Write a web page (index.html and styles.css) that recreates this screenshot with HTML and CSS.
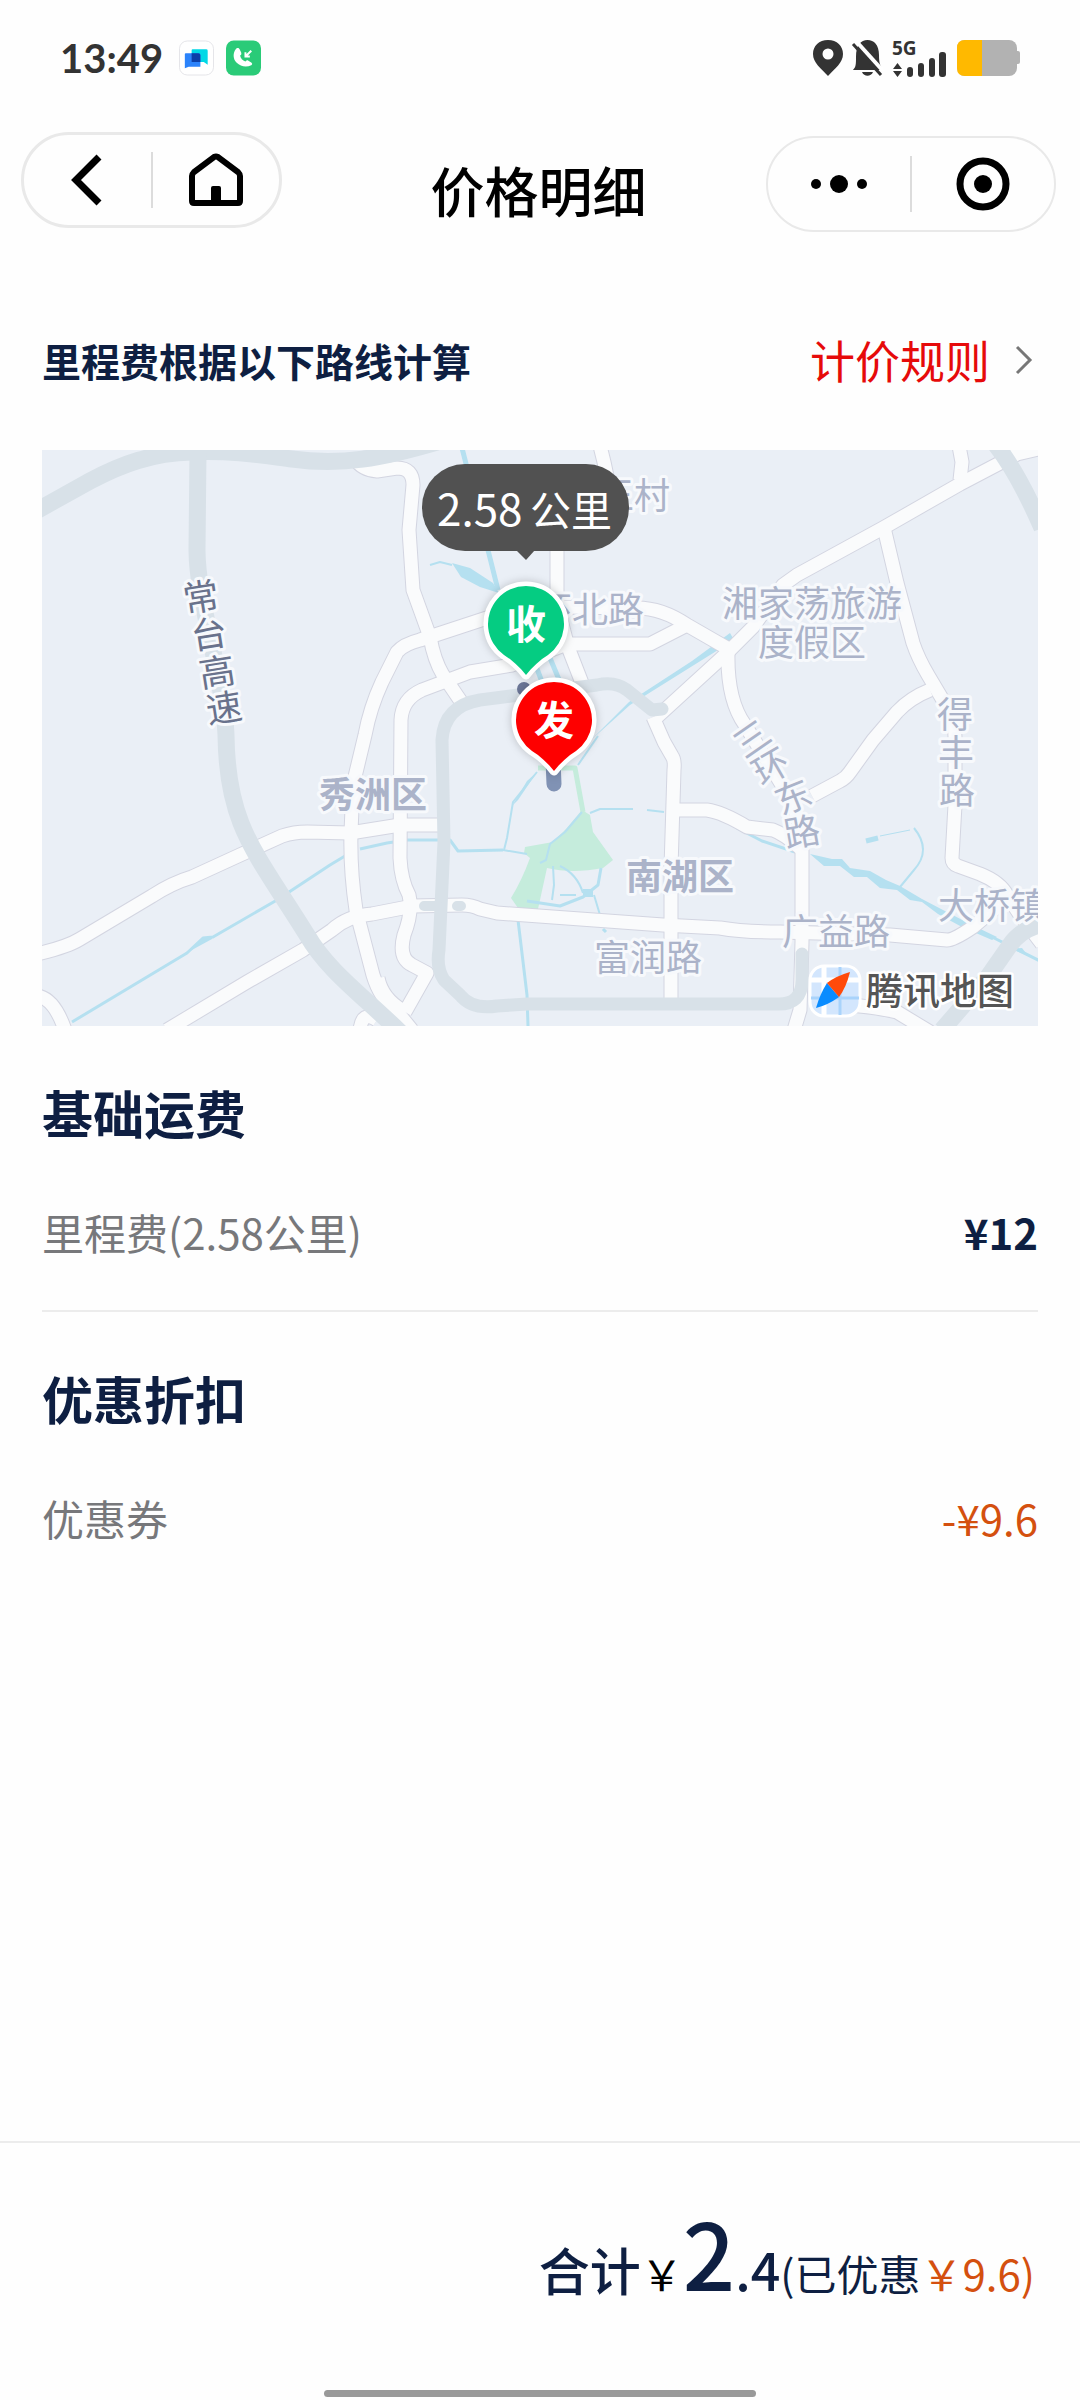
FILE: index.html
```html
<!DOCTYPE html>
<html lang="zh-CN">
<head>
    <meta charset="UTF-8">
    <meta name="viewport" content="width=device-width, initial-scale=1.0">
    <title>价格明细</title>
    <link rel="stylesheet" href="styles.css">
</head>
<body>
    <div class="status-bar">
        <div class="status-left">
            <span class="time">13:49</span>
            <svg class="app-icon" viewBox="0 0 36 36">
                <rect x="0.5" y="0.5" width="35" height="35" rx="8" fill="#fff" stroke="#e4e4e8"/>
                <path d="M14 9h14q1.500 0 1.500 1.500v14.500l-4-3H13V10q0-1 1-1z" fill="#00d8e6"/>
                <path d="M7 13h13q2 0 2 2v12H10l-4 1.500V14q0-1 1-1z" fill="#2b83fb"/>
                <path d="M13 13h7q2 0 2 2v7h-9z" fill="#0b3fa8"/>
            </svg>
            <svg class="app-icon" viewBox="0 0 36 36">
                <rect width="36" height="36" rx="8" fill="#2acb78"/>
                <path d="M10 9c-3 4-3 10 1 14 4 4 10 5 15 2.500 1.500-.8 1-2 0-2.800l-3-2c-1-.6-2-.2-3 .8-3-.8-5-3-5.500-6 1.500-1 1.500-2 1-3.500L14 9c-1-2-3-1.500-4 0z" fill="#fff"/>
                <path d="M26 10.500l-6 6m0-4.500v4.500h4.500" fill="none" stroke="#fff" stroke-width="2"/>
            </svg>
        </div>
        <div class="status-right">
            <svg class="status-icons" viewBox="0 0 208 38">
                <path d="M16 1C7 1 1 7 1 15c0 9 8 14 15 22 7-8 15-13 15-22C31 7 25 1 16 1zm0 8.500a5.500 5.500 0 1 1 0 11 5.500 5.500 0 0 1 0-11z" fill="#333" fill-rule="evenodd"/>
                <path d="M41 31c3-3 3-6 3-13C44 6 49 1 55.500 1S67 6 67 16c0 8 1 10 4 15zM50 33h11c-2 5-9 5-11 0z" fill="#333"/>
                <path d="M44 2l28 31" stroke="#fff" stroke-width="4"/>
                <path d="M41 5l28 31" stroke="#333" stroke-width="3"/>
                <text class="net-label" x="80" y="16">5G</text>
                <path d="M81 30l4.500-6 4.500 6zM81 32l4.500 6 4.500-6z" fill="#333"/>
                <g fill="#333">
                    <rect x="95" y="28" width="6" height="10" rx="3"/>
                    <rect x="106" y="24" width="6" height="14" rx="3"/>
                    <rect x="117" y="19" width="6" height="19" rx="3"/>
                    <rect x="127" y="13" width="7" height="25" rx="3"/>
                </g>
                <rect x="145" y="1" width="60" height="36" rx="8" fill="#b2b2b2"/>
                <rect x="203" y="12" width="5" height="13" rx="2" fill="#b2b2b2"/>
                <path d="M153 1h17v36h-17q-8 0-8-8V9q0-8 8-8z" fill="#ffb900"/>
            </svg>
        </div>
    </div>

    <header class="nav">
        <div class="capsule capsule-left">
            <button type="button" aria-label="返回">
                <svg width="32" height="52" viewBox="0 0 32 52"><path d="M28 3L5 26l23 23" fill="none" stroke="#000" stroke-width="7"/></svg>
            </button>
            <span class="capsule-line"></span>
            <button type="button" aria-label="首页">
                <svg width="56" height="54" viewBox="0 0 56 54">
                    <path d="M4 23q0-2 2-4L26 4q2-1 4 0l20 15q2 2 2 4v25q0 2-2 2H6q-2 0-2-2z" fill="none" stroke="#000" stroke-width="6"/>
                    <path d="M23 50V35q0-2 2-2h6q2 0 2 2v15z"/>
                </svg>
            </button>
        </div>
        <h1>价格明细</h1>
        <div class="capsule capsule-right">
            <button type="button" aria-label="更多">
                <svg width="58" height="20" viewBox="0 0 58 20"><circle cx="6" cy="10" r="5"/><circle cx="29" cy="10" r="9"/><circle cx="52" cy="10" r="5"/></svg>
            </button>
            <span class="capsule-line"></span>
            <button type="button" aria-label="关闭">
                <svg width="54" height="54" viewBox="0 0 54 54"><circle cx="27" cy="27" r="23" fill="none" stroke="#000" stroke-width="7"/><circle cx="27" cy="27" r="9"/></svg>
            </button>
        </div>
    </header>

    <main class="content">
        <div class="route-head">
            <h2 class="route-title">里程费根据以下路线计算</h2>
            <a class="rule-link" href="#rules">计价规则
                <svg width="20" height="30" viewBox="0 0 20 30"><path d="M3 2l13 13L3 28" fill="none" stroke="#777" stroke-width="3"/></svg>
            </a>
        </div>

        <svg class="map" viewBox="0 0 996 576" role="img" aria-label="路线地图">
            <defs>
                <!-- all ordinary roads, drawn twice: outline, then fill -->
                <g id="roads">
                    <path d="M1000 -2L975 4 958 13 918 34 841 78 755 125 741 135 711 177 685 203 615 267"/>
                    <path d="M917 -4L920 12 918 30"/>
                    <path d="M843 82L855 133 871 193Q876 208 886 225L905 257Q913 270 913 287V355L910 408Q910 414 916 416L938 424Q958 432 965 445L978 465 1000 494"/>
                    <path d="M888 240Q868 248 855 262L831 290 808 322Q804 328 798 331L770 346"/>
                    <path d="M686 203Q685 250 703 275L740 335Q758 360 760 398V492L758 560 752 580"/>
                    <path d="M685 198L645 175Q620 158 595 158L518 157Q480 157 448 167L378 190Q362 194 355 202L340 232Q328 258 323 285L311 335 309 382Q308 420 314 460L331 525Q338 548 352 558L370 580"/>
                    <path d="M645 175L608 194H525L470 215 428 222 380 240Q360 249 359 270L358 408Q359 430 367 445 371 462 362 485 356 508 370 515L385 523 363 562"/>
                    <path d="M312 8Q320 20 335 21L355 18Q371 18 371 35L367 80 371 140 388 187Q392 210 401 225L420 253"/>
                    <path d="M558 -4L562 12 570 50"/>
                    <path d="M515 90V155L526 197 540 233"/>
                    <path d="M-5 504Q25 497 38 489L110 446Q130 433 150 427L198 405 240 386Q252 382 265 382L308 383 358 375H402"/>
                    <path d="M125 580L205 532 261 500 290 480Q305 466 330 464L371 456 420 455Q430 455 438 459L455 463 621 475 678 478Q700 482 738 482L848 485 905 490Q912 490 931 477L968 446"/>
                    <path d="M611 267L622 292 630 306Q633 310 632 320L629 418V552"/>
                    <path d="M631 360H665Q680 362 705 377L731 380Q742 384 758 398"/>
                    <path d="M-5 546Q12 548 23 580"/>
                    <path d="M336 528Q340 548 360 560"/>
                    <path d="M800 554Q840 558 855 562L888 582"/>
                    <path d="M335 570Q320 560 318 580"/>
                </g>
                <path id="pin" d="M0 51C-6 43-14 36-22 31A38 38 0 1 1 22 31C14 36 6 43 0 51Z"/>
            </defs>

            <rect width="996" height="576" fill="#eaeff6"/>

            <g class="park">
                <path d="M540 360L548 365 551 382 571 410 561 418Q530 424 505 418L496 459 476 458 469 448Q480 430 488 408L482 403 483 397 511 392 525 378Z"/>
                <path class="park-edge" d="M496 318H533L541 362"/>
            </g>

            <g class="water">
                <path class="w5" d="M420 -2L447 104 456 140"/>
                <path class="w2" d="M388 115L398 112 410 115"/>
                <path class="blob" d="M410 113L428 118 451 133 457 143 438 137 419 127Z"/>
                <path class="w5" d="M491 208L500 232M508 208L518 232"/>
                <path class="blob" d="M688 183L692 190 660 210 588 255 549 290 587 252 650 211Z"/>
                <path class="w3" d="M30 572L145 503 161 488 171 487 235 450 288 415 303 406M318 399L345 393 365 390H408L416 401 461 400"/>
                <path class="blob" d="M148 501L160 488 170 486 170 489Z"/>
                <path class="w2" d="M461 400L485 404M495 322L471 352 465 388 462 400"/>
                <path class="blob" d="M495 322L485 331 470 356 476 350Z"/>
                <path class="w2" d="M556 286L536 315M540 362L523 382 508 394 504 410 498 413M548 363L558 359H591M605 360L622 362"/>
                <path class="w2" d="M511 416L512 435 510 450M518 416Q535 424 541 443M518 445H534M552 445L558 465"/>
                <path class="w3" d="M476 470L485 545 486 576M485 451L518 456 541 447 556 435 559 418M561 479L564 482"/>
                <path class="blob" d="M541 439H551V447H541Z"/>
                <path class="w3" d="M695 378L720 391 753 402"/>
                <path class="blob" d="M768 404L790 409 800 409 808 418 828 421 844 430 858 436 880 449 901 460 930 475 955 487 950 490 920 477 896 464 880 452 868 450 855 440 838 438 825 427 812 427 798 416 782 416Z"/>
                <path class="w3" d="M952 488L998 511"/>
                <path class="blob" d="M970 499L980 498 986 506Z"/>
                <path class="w2" d="M858 437L872 420Q890 400 872 378"/>
                <path class="w1" d="M838 386L868 380"/>
                <path class="w5" d="M824 391L836 388"/>
            </g>

            <use href="#roads" class="road-edge"/>
            <use href="#roads" class="road-fill"/>

            <g class="highway">
                <path class="wide" d="M-6 61L48 31C80 14 110 3 150 2C190 0 225 6 250 9C300 16 340 8 395 -8"/>
                <path class="wide" d="M156 2L155 100C155 150 182 230 184 285C185 375 212 400 265 485C285 520 320 545 358 582"/>
                <path class="wide" d="M950 -10Q975 20 1000 78"/>
                <path class="wide" d="M900 580L945 528 968 495Q980 478 1002 474"/>
                <path class="ring" d="M620 259L610 260 585 240Q573 231 555 235L438 250Q402 256 400 290L402 392 397 500Q394 518 402 530L418 545Q430 560 455 556L485 554H735Q760 555 760 530V504"/>
                <path class="stub" d="M382 456H396M415 456H419"/>
            </g>

            <g class="label">
                <text x="592" y="59">王村</text>
                <text x="548" y="173">环北路</text>
                <text x="770" y="167">湘家荡旅游</text>
                <text x="770" y="206">度假区</text>
                <text x="606" y="521">富润路</text>
                <text x="794" y="495">广益路</text>
                <text x="950" y="469">大桥镇</text>
                <text class="district" x="331" y="358">秀洲区</text>
                <text class="district" x="638" y="440">南湖区</text>
                <text x="913" y="278">得</text>
                <text x="914" y="316">丰</text>
                <text x="915" y="354">路</text>
                <text transform="translate(710 289) rotate(-35)" y="13">三</text>
                <text transform="translate(729 317) rotate(-30)" y="13">环</text>
                <text transform="translate(751 347) rotate(-22)" y="13">东</text>
                <text transform="translate(760 382) rotate(-10)" y="13">路</text>
            </g>
            <g class="label label-dark">
                <text transform="translate(159 147) rotate(-9)" y="13">常</text>
                <text transform="translate(167 184) rotate(-9)" y="13">台</text>
                <text transform="translate(175 222) rotate(-9)" y="13">高</text>
                <text transform="translate(182 258) rotate(-9)" y="13">速</text>
            </g>

            <!-- Tencent map mark -->
            <g>
                <rect x="768" y="516" width="50" height="50" rx="14" fill="#d3e6fd" stroke="#fff" stroke-width="3"/>
                <path d="M782 517V565M769 530H817" stroke="#fff" stroke-width="5"/>
                <path d="M798 517V565M769 548H817" stroke="#a9d3fb" stroke-width="3"/>
                <path d="M785 533Q778 544 774 558 786 555 797 547Z" fill="#0a8cff"/>
                <path d="M808 522Q794 526 785 533L797 547Q804 538 808 522Z" fill="#ff4a0a"/>
                <text class="map-brand" x="824" y="555">腾讯地图</text>
            </g>

            <circle cx="482" cy="239" r="7" fill="#6c7798"/>
            <path d="M511 310L512 334" stroke="#8092b4" stroke-width="15" stroke-linecap="round"/>

            <g class="pin" transform="translate(484 174)">
                <use href="#pin" fill="#05cc82"/>
                <text y="15">收</text>
            </g>
            <g class="pin" transform="translate(512 270)">
                <use href="#pin" fill="#fe0000"/>
                <text y="15">发</text>
            </g>

            <g class="bubble">
                <rect x="380" y="14" width="207" height="87" rx="43"/>
                <path d="M474 100H493L484 110Z"/>
                <text class="km" x="395" y="76">2.58</text>
                <text class="unit" x="488" y="76">公里</text>
            </g>
        </svg>

        <section class="fee">
            <h2>基础运费</h2>
            <dl class="fee-row">
                <dt>里程费(2.58公里)</dt>
                <dd class="price">¥12</dd>
            </dl>
        </section>
        <section class="fee">
            <h2>优惠折扣</h2>
            <dl class="fee-row">
                <dt>优惠券</dt>
                <dd class="discount">-¥9.6</dd>
            </dl>
        </section>
    </main>

    <footer class="total">
        <p><strong class="total-label">合计</strong><span class="yen">￥</span><strong class="total-int">2</strong><strong class="total-dec">.4</strong><span>(已优惠</span><span class="discount">￥9.6)</span></p>
        <div class="home-bar"></div>
    </footer>
</body>
</html>
```

FILE: styles.css
```css
* {
    box-sizing: border-box;
    margin: 0;
    padding: 0;
}

body {
    display: flex;
    flex-direction: column;
    min-height: 100vh;
    background: #fefefe;
    color: #0e1f42;
    font-family: "Noto Sans CJK SC", "Noto Sans", sans-serif;
    font-size: 42px;
    line-height: 60px;
}

h1, h2 {
    font-weight: 700;
}

/* status bar */
.status-bar {
    display: flex;
    justify-content: space-between;
    align-items: center;
    height: 116px;
    padding: 0 60px;
}

.status-left {
    display: flex;
    align-items: center;
    gap: 12px;
}

.time {
    margin-right: 4px;
    color: #333;
    font-family: Lato, sans-serif;
    font-size: 40px;
    font-weight: 700;
}

.app-icon {
    width: 35px;
    height: 36px;
}

.status-right {
    display: flex;
}

.status-icons {
    width: 208px;
    height: 38px;
}

.net-label {
    fill: #333;
    font-family: "Open Sans", sans-serif;
    font-size: 19px;
    font-weight: 700;
}

/* nav */
.nav {
    display: grid;
    grid-template-columns: 1fr auto 1fr;
    align-items: start;
    padding: 16px 24px 0 21px;
}

.nav h1 {
    padding-top: 28px;
    color: #000;
    font-size: 54px;
    font-weight: 500;
}

.capsule {
    display: flex;
    align-items: center;
    height: 96px;
    border: 2px solid #e9e9e9;
    border-radius: 48px;
}

.capsule button {
    display: flex;
    flex: 1;
    justify-content: center;
    border: none;
    background: none;
}

.capsule-left {
    width: 261px;
    border-width: 3px;
}

.capsule-right {
    justify-self: end;
    width: 290px;
    margin-top: 4px;
}

.capsule-line {
    width: 2px;
    height: 56px;
    background: #dcdcdc;
}

/* content */
.content {
    padding: 0 42px;
}

.route-head {
    display: flex;
    justify-content: space-between;
    align-items: center;
    padding: 98px 4px 60px 0;
}

.route-title {
    font-size: 39px;
}

.rule-link {
    display: flex;
    align-items: center;
    gap: 24px;
    color: #e60a0a;
    font-size: 45px;
    text-decoration: none;
}

.map {
    display: block;
    width: 100%;
    height: auto;
    font-family: "Noto Sans CJK SC", sans-serif;
}

.map path {
    stroke-linejoin: round;
}

.road-edge {
    fill: none;
    stroke: #d3d5e1;
    stroke-width: 15px;
}

.road-fill {
    fill: none;
    stroke: #fafbfc;
    stroke-width: 13px;
}

.highway path {
    fill: none;
    stroke: #d8e1e8;
}

.highway .wide {
    stroke-width: 17px;
}

.highway .ring {
    stroke-width: 13px;
    stroke-linecap: round;
}

.highway .stub {
    stroke-width: 10px;
    stroke-linecap: round;
}

.water path {
    fill: none;
    stroke: #b5e0f0;
}

.water .blob {
    fill: #b5e0f0;
    stroke: none;
}

.water .w1 {
    stroke-width: 1px;
}

.water .w2 {
    stroke-width: 2px;
}

.water .w3 {
    stroke-width: 3px;
}

.water .w5 {
    stroke-width: 5px;
}

.park {
    fill: #c5ecdc;
}

.park .park-edge {
    fill: none;
    stroke: #c5ecdc;
    stroke-width: 5px;
}

.label text {
    fill: #abb3c9;
    stroke: #f7f9fc;
    stroke-width: 6px;
    stroke-linejoin: round;
    paint-order: stroke;
    font-size: 36px;
    text-anchor: middle;
}

.label .district {
    font-weight: 700;
}

.label-dark text {
    fill: #69728c;
}

.map-brand {
    fill: #555;
    stroke: #fff;
    stroke-width: 5px;
    stroke-linejoin: round;
    paint-order: stroke;
    font-size: 37px;
    font-weight: 500;
}

.pin use {
    stroke: #fff;
    stroke-width: 9px;
    paint-order: stroke;
    filter: drop-shadow(0 0 4px rgba(0, 0, 0, 0.2));
}

.pin text {
    fill: #fff;
    font-size: 40px;
    font-weight: 700;
    text-anchor: middle;
}

.bubble {
    fill: #515151;
}

.bubble text {
    fill: #fff;
}

.km {
    font-size: 44px;
}

.unit {
    font-size: 41px;
}

/* fees */
.fee {
    padding: 56px 0 48px;
}

.fee + .fee {
    border-top: 2px solid #ececec;
}

.fee h2 {
    font-size: 51px;
}

.fee-row {
    display: flex;
    justify-content: space-between;
    margin-top: 60px;
}

.fee-row dt {
    color: #77787b;
}

.price {
    font-weight: 700;
}

.discount {
    color: #d4500f;
}

/* total */
.total {
    display: flex;
    flex-direction: column;
    align-items: center;
    margin-top: auto;
    padding-bottom: 3px;
    border-top: 2px solid #ececec;
}

.total p {
    align-self: flex-end;
    padding: 48px 45px 57px 0;
    line-height: 120px;
}

.total strong {
    font-weight: 500;
}

.total .total-label {
    font-size: 51px;
}

.yen {
    color: #000;
}

.total .total-int {
    font-size: 92px;
}

.total .total-dec {
    font-size: 52px;
}

.home-bar {
    width: 40%;
    height: 7px;
    border-radius: 4px;
    background: #999;
}
```
